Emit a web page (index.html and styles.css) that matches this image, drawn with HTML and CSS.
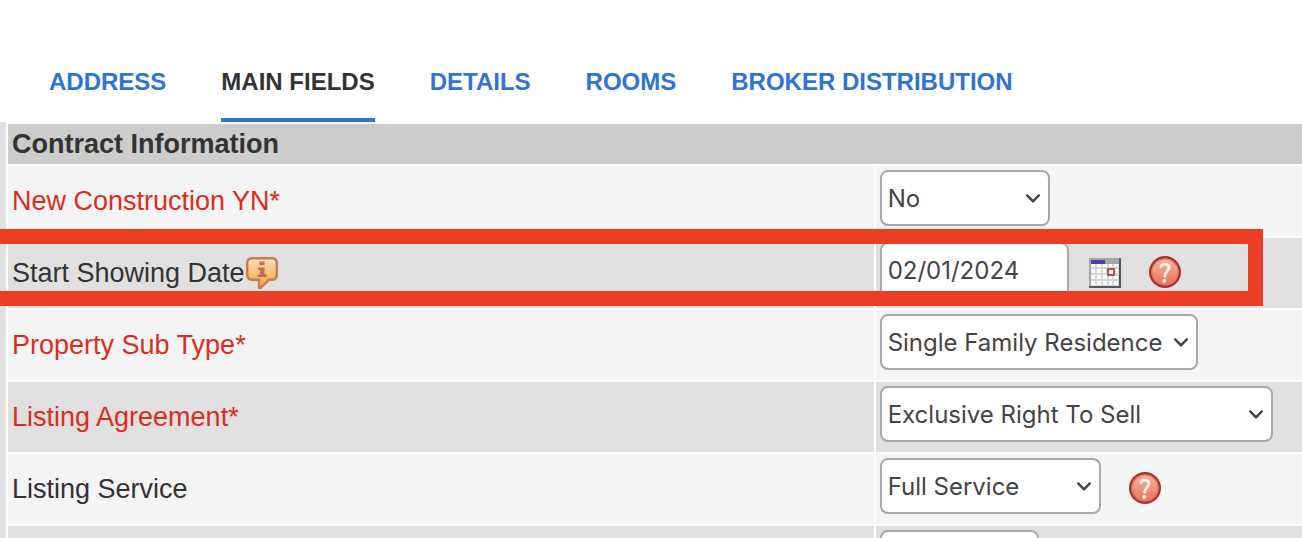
FILE: index.html
```html
<!DOCTYPE html>
<html lang="en">
<head>
    <meta charset="UTF-8">
    <meta name="viewport" content="width=device-width, initial-scale=1.0">
    <title>Main Fields</title>
    <link rel="stylesheet" href="styles.css">
</head>
<body>
    <svg class="defs" aria-hidden="true">
        <defs>
            <linearGradient id="orange" x1="0" y1="0" x2="0" y2="1">
                <stop offset="0" stop-color="#fbdcae"/>
                <stop offset="0.5" stop-color="#f8c27b"/>
                <stop offset="1" stop-color="#efa044"/>
            </linearGradient>
            <linearGradient id="red" x1="0" y1="0" x2="0" y2="1">
                <stop offset="0" stop-color="#f6b8a6"/>
                <stop offset="0.5" stop-color="#ee967c"/>
                <stop offset="1" stop-color="#ea6e4c"/>
            </linearGradient>
        </defs>
        <symbol id="help" viewBox="0 0 32 32">
            <circle cx="16" cy="16" r="14.8" fill="url(#red)" stroke="#a93230" stroke-width="2.4"/>
            <circle cx="16" cy="16" r="13" fill="none" stroke="#dd7560" stroke-width="1.2"/>
            <path d="M12 10.8C12.5 7.4 20 7.2 20 11.6C20 15 15.8 15.4 15.6 20.4" fill="none" stroke="#fdeee8" stroke-width="2.8" stroke-linecap="round"/>
            <circle cx="15.2" cy="25" r="2" fill="#fdeee8"/>
        </symbol>
    </svg>

    <nav class="tabs">
        <a href="#address">ADDRESS</a>
        <a href="#main" class="active">MAIN FIELDS</a>
        <a href="#details">DETAILS</a>
        <a href="#rooms">ROOMS</a>
        <a href="#broker">BROKER DISTRIBUTION</a>
    </nav>

    <form class="fields">
        <h2>Contract Information</h2>

        <div class="row">
            <div class="name"><label class="required" for="construction">New Construction YN*</label></div>
            <div class="value">
                <select id="construction" class="short">
                    <option>No</option>
                    <option>Yes</option>
                </select>
            </div>
        </div>

        <div class="row alt">
            <div class="name">
                <label for="showing">Start Showing Date</label>
                <svg class="info" viewBox="0 0 32 32" width="32" height="32">
                    <path d="M6 1.2H26Q30.8 1.2 30.8 6V18Q30.8 22.5 26 22.8H23L14.5 31H13V22.8H6Q1.2 22.5 1.2 18V6Q1.2 1.2 6 1.2Z" fill="url(#orange)" stroke="#c97c52" stroke-width="2.4" stroke-linejoin="round"/>
                    <path d="M4 7Q4 3.6 7 3.6H25Q28 3.6 28 7" fill="none" stroke="#fdebce" stroke-width="1.4"/>
                    <path d="M13.5 4.5H18.5V8H13.5ZM12 10.5H18.5V17.5H20.5V20H11.5V17.5H14V13H12Z" fill="#c4704f"/>
                </svg>
            </div>
            <div class="value">
                <input type="text" id="showing" class="date" value="02/01/2024">
                <button type="button" class="calendar" aria-label="Pick a date">
                    <svg viewBox="0 0 32 32" width="32" height="32">
                        <rect x="0" y="2" width="32" height="30" fill="#555b5b"/>
                        <rect x="0" y="2" width="30" height="28" fill="#a3a5a6"/>
                        <rect x="2" y="8" width="28" height="22" fill="#d6d6d8"/>
                        <rect x="2" y="4" width="14" height="4" fill="#4747a5"/>
                        <path d="M2 8h4v3h-4zM8 8h4v3h-4zM14 8h4v3h-4zM20 8h3v3h-3zM25 8h4v3h-4zM2 13h4v4h-4zM8 13h4v4h-4zM14 13h3v4h-3zM2 19h4v4h-4zM8 19h4v4h-4zM14 19h4v4h-4zM20 20h3v3h-3zM25 20h4v3h-4zM2 25h4v4h-4zM8 25h4v4h-4zM14 25h4v4h-4zM20 25h3v4h-3zM25 25h4v4h-4zM27 13h2v4h-2z" fill="#fff"/>
                        <rect x="19" y="13" width="6" height="6" fill="#eee" stroke="#a95a57" stroke-width="2"/>
                    </svg>
                </button>
                <button type="button" class="help" aria-label="Help"><svg width="32" height="32"><use href="#help"/></svg></button>
            </div>
            <div class="highlight"></div>
        </div>

        <div class="row">
            <div class="name"><label class="required" for="subtype">Property Sub Type*</label></div>
            <div class="value">
                <select id="subtype" class="long">
                    <option>Single Family Residence</option>
                </select>
            </div>
        </div>

        <div class="row alt">
            <div class="name"><label class="required" for="agreement">Listing Agreement*</label></div>
            <div class="value">
                <select id="agreement" class="longest">
                    <option>Exclusive Right To Sell</option>
                </select>
            </div>
        </div>

        <div class="row">
            <div class="name"><label for="service">Listing Service</label></div>
            <div class="value">
                <select id="service" class="medium">
                    <option>Full Service</option>
                </select>
                <button type="button" class="help" aria-label="Help"><svg width="32" height="32"><use href="#help"/></svg></button>
            </div>
        </div>

        <div class="row alt">
            <div class="name"></div>
            <div class="value">
                <select class="shortest">
                    <option></option>
                </select>
            </div>
        </div>
    </form>
</body>
</html>
```

FILE: styles.css
```css
* {
    box-sizing: border-box;
}

body {
    margin: 0;
    height: 100vh;
    overflow: hidden;
    background-color: #fff;
    color: #333;
    font-family: "Liberation Sans", Arial, sans-serif;
    font-size: 27px;
}

.defs {
    position: absolute;
    width: 0;
    height: 0;
}

.tabs {
    display: flex;
    gap: 55px;
    padding: 42px 49px 0;
    font-size: 24px;
    font-weight: bold;
    line-height: 28px;
    white-space: nowrap;
}

.tabs a {
    padding: 26px 0 22px;
    border-bottom: 4px solid transparent;
    color: #2f74d3;
    text-decoration: none;
}

.tabs .active {
    color: #333;
    border-bottom-color: #2f74d3;
}

.fields {
    display: grid;
    gap: 2px;
    padding-top: 2px;
    padding-left: 2px;
    border-left: 6px solid #e0e0e0;
}

h2 {
    margin: 0;
    padding: 0 4px;
    background-color: #ccc;
    font-size: 27px;
    line-height: 40px;
}

.row {
    display: grid;
    grid-template-columns: 67fr 33fr;
    gap: 2px;
    position: relative;
}

.name, .value {
    display: flex;
    background-color: #f4f4f4;
}

.alt .name, .alt .value {
    background-color: #e0e0e0;
}

.name {
    align-items: center;
    gap: 1px;
    padding: 0 4px;
}

.value {
    align-items: flex-end;
    padding: 4px 4px 10px;
}

.required {
    color: #dc2c20;
}

select, input {
    height: 56px;
    padding: 0 6px;
    border: 2px solid #a9a9a9;
    border-radius: 8px;
    background-color: #fff;
    color: #444;
    font-family: Inter, sans-serif;
    font-size: 24px;
}

select {
    appearance: none;
    background-image: url("data:image/svg+xml,%3Csvg xmlns='http://www.w3.org/2000/svg' width='14' height='9'%3E%3Cpath d='M1.2 1.4L7 7.4L12.8 1.4' fill='none' stroke='%23444' stroke-width='2.4' stroke-linecap='round' stroke-linejoin='round'/%3E%3C/svg%3E");
    background-repeat: no-repeat;
    background-position: right 8px center;
}

.shortest {
    width: 159px;
}

.short {
    width: 170px;
}

.medium {
    width: 221px;
}

.long {
    width: 318px;
}

.longest {
    width: 393px;
}

.date {
    width: 189px;
}

button {
    margin: 0 0 10px;
    padding: 0;
    border: none;
    background: none;
    cursor: pointer;
}

button svg {
    display: block;
}

.calendar {
    margin-left: 20px;
}

.help {
    margin-left: 28px;
}

/* red frame around the showing date */
.highlight {
    position: absolute;
    top: -9px;
    bottom: 2px;
    left: -8px;
    right: 39px;
    border: 15px solid #ea3f26;
    border-left: none;
    pointer-events: none;
}
```
